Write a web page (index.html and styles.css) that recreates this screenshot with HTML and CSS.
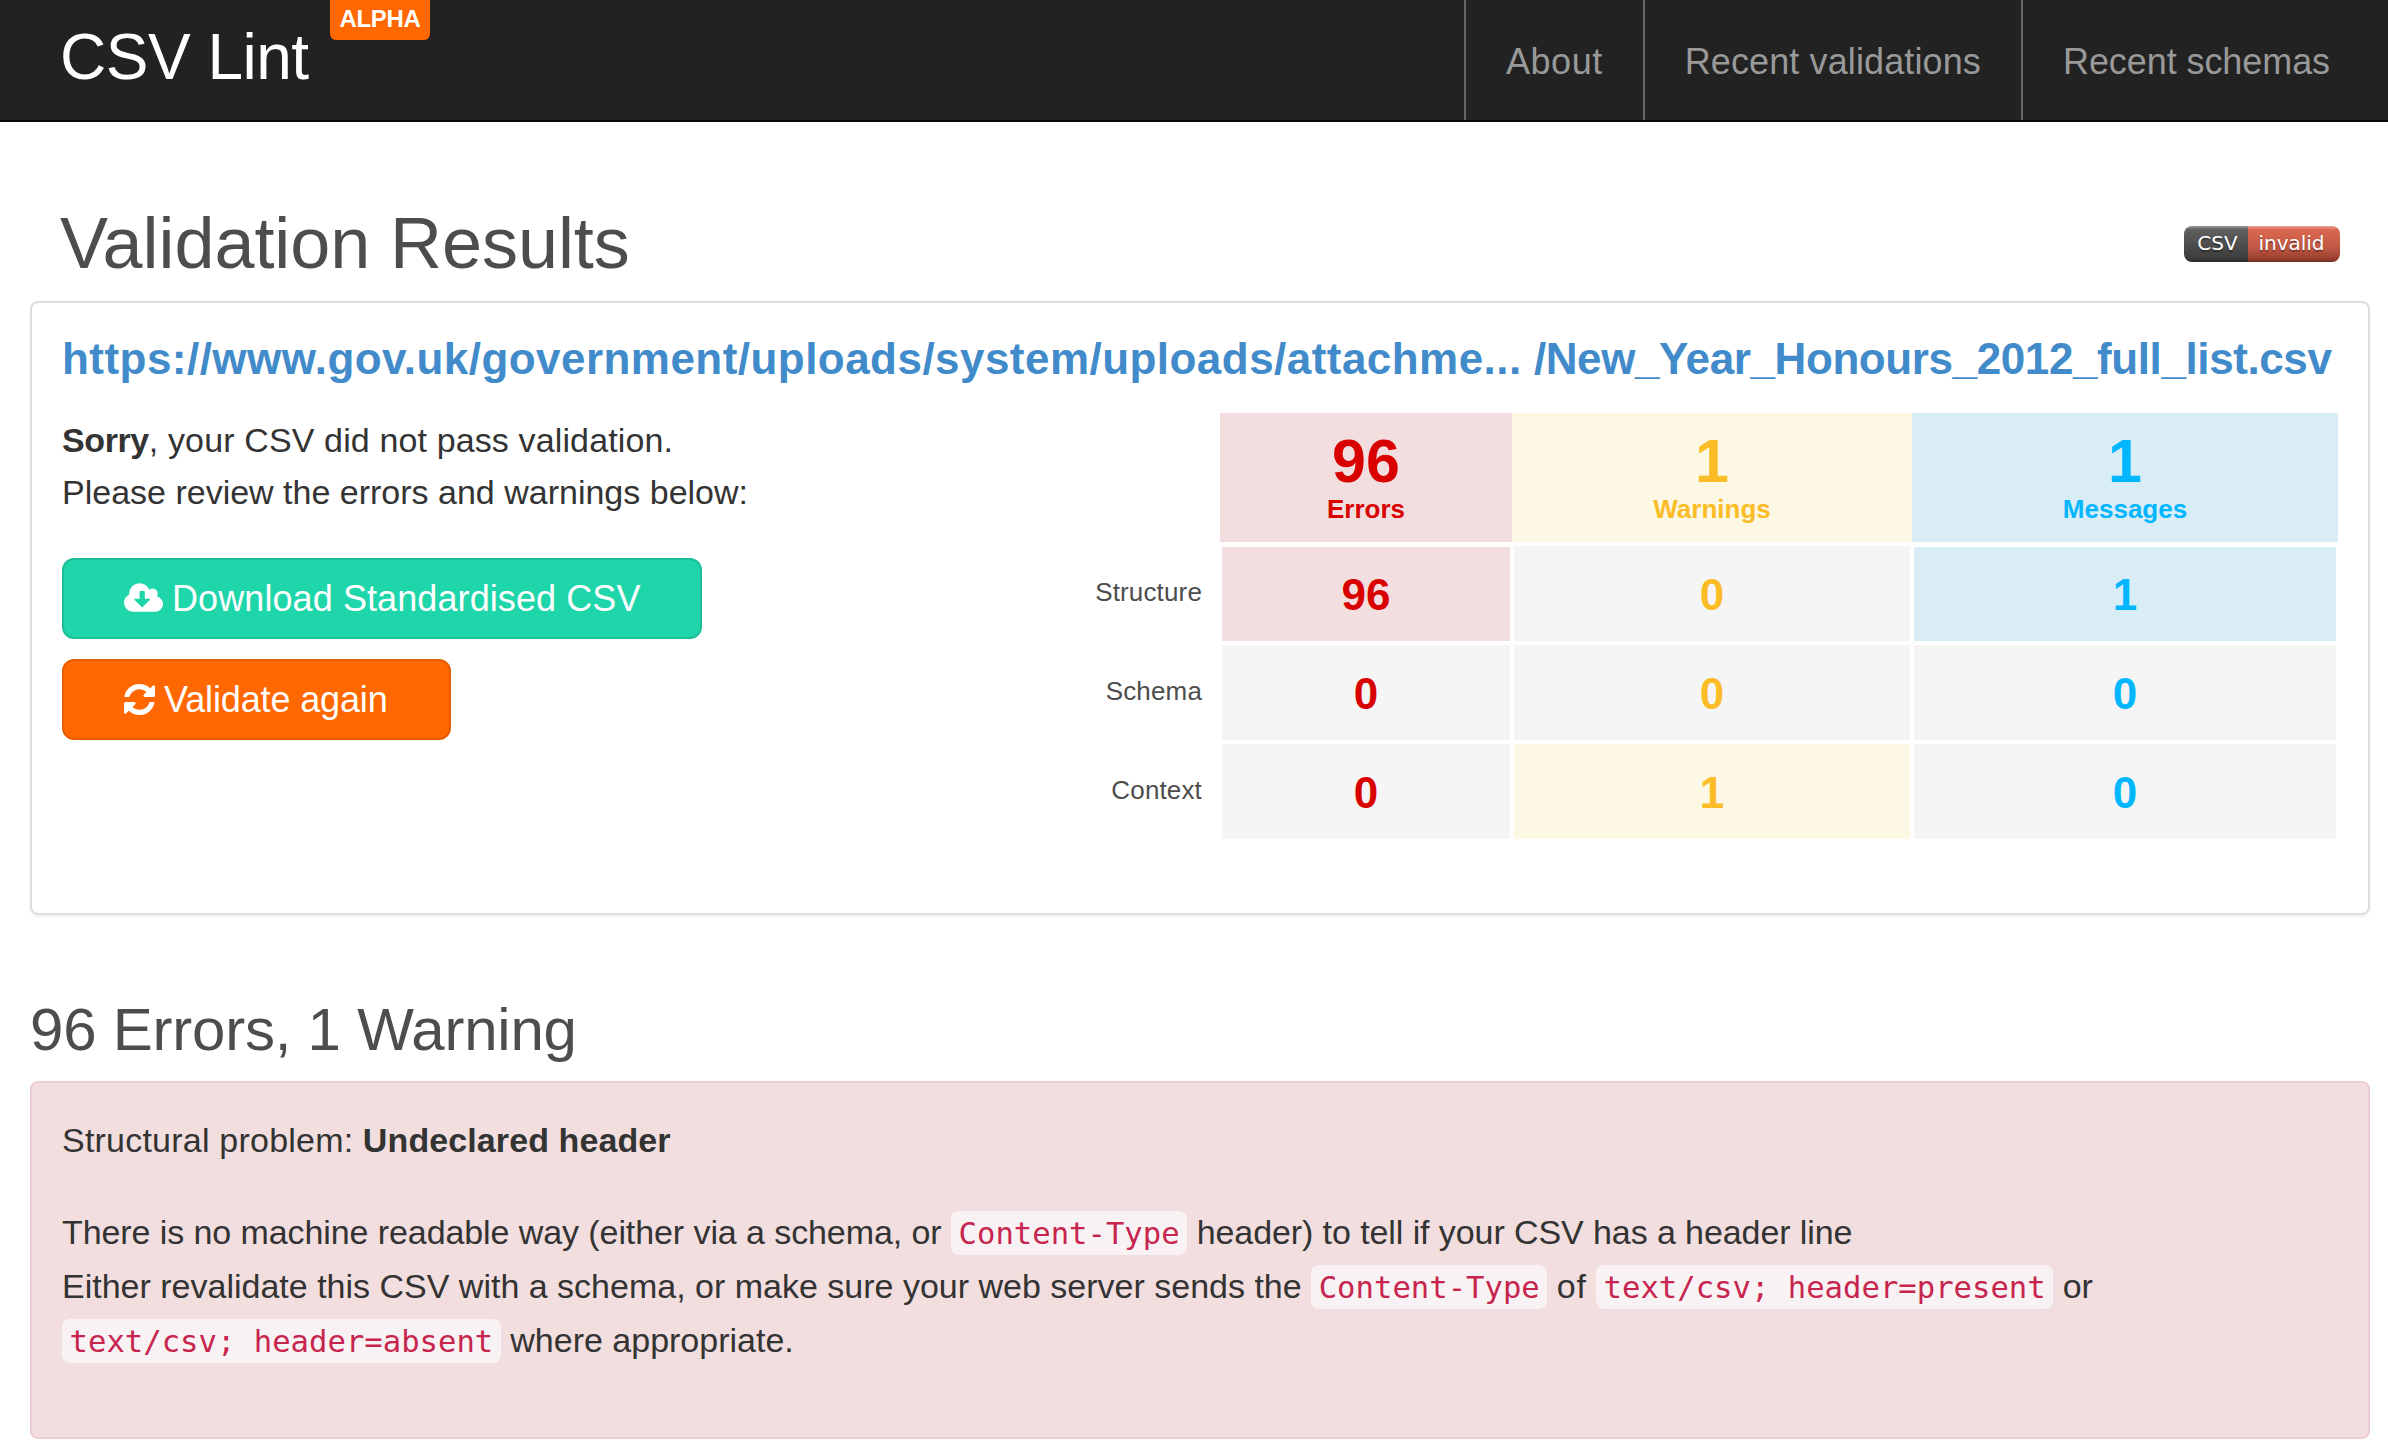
FILE: index.html
```html
<!DOCTYPE html>
<html lang="en">
<head>
<meta charset="utf-8">
<title>CSV Lint</title>
<link rel="stylesheet" href="styles.css">
</head>
<body>
<header class="navbar">
  <a class="brand"><span class="brand-name">CSV Lint</span><span class="alpha">ALPHA</span></a>
  <nav class="nav">
    <a class="nav-link nav-about">About</a>
    <a class="nav-link nav-validations">Recent validations</a>
    <a class="nav-link nav-schemas">Recent schemas</a>
  </nav>
</header>
<main class="page">
  <div class="title-row">
    <h1 class="title">Validation Results</h1>
    <div class="badge"><span class="badge-key">CSV</span><span class="badge-value">invalid</span></div>
  </div>
  <section class="panel">
    <h3 class="source"><a><span class="source-path">https://www.gov.uk/government/uploads/system/uploads/attachme...</span> <span class="source-file">/New_Year_Honours_2012_full_list.csv</span></a></h3>
    <div class="summary">
      <div class="intro">
        <p class="lead"><strong>Sorry</strong><span class="lead-rest">, your CSV did not pass validation.</span><br>Please review the errors and warnings below:</p>
        <a class="btn btn-download">
          <svg class="icon-cloud" viewBox="0 0 1920 1408"><path d="M1280 800q0-14-9-23t-23-9h-224V416q0-13-9.500-22.500T992 384H800q-13 0-22.500 9.500T768 416v352H544q-13 0-22.500 9.500T512 800q0 14 9 23l352 352q9 9 23 9t23-9l351-351q10-12 10-24zm640 224q0 159-112.500 271.500T1536 1408H448q-185 0-316.500-131.500T0 960q0-130 70-240t188-165q-2-30-2-43 0-212 150-362T768 0q156 0 285.500 87T1242 318q71-62 166-62 106 0 181 75t75 181q0 76-41 138 130 31 213.500 135.500T1920 1024z"/></svg>
          <span>Download Standardised CSV</span>
        </a>
        <a class="btn btn-again">
          <svg class="icon-refresh" viewBox="0 0 1536 1536"><path d="M1511 928q0 5-1 7-64 268-268 434.500T764 1536q-146 0-282.500-55T238 1324l-129 129q-19 19-45 19t-45-19-19-45V960q0-26 19-45t45-19h448q26 0 45 19t19 45-19 45l-137 137q71 66 161 102t187 36q134 0 250-65t186-179q11-17 53-117 8-23 30-23h192q13 0 22.500 9.500t9.500 22.500zm25-800v448q0 26-19 45t-45 19h-448q-26 0-45-19t-19-45 19-45l138-138Q969 256 768 256q-134 0-250 65T332 500q-11 17-53 117-8 23-30 23H50q-13 0-22.500-9.500T18 608v-7q65-268 270-434.500T768 0q146 0 284 55.500T1297 212l130-129q19-19 45-19t45 19 19 45z"/></svg>
          <span>Validate again</span>
        </a>
      </div>
      <div class="results">
        <div></div>
        <div class="total danger errors"><b>96</b><span>Errors</span></div>
        <div class="total warning warnings"><b>1</b><span>Warnings</span></div>
        <div class="total info messages"><b>1</b><span>Messages</span></div>
        <div class="label">Structure</div>
        <div class="cell danger errors">96</div>
        <div class="cell warnings">0</div>
        <div class="cell info messages">1</div>
        <div class="label">Schema</div>
        <div class="cell errors">0</div>
        <div class="cell warnings">0</div>
        <div class="cell messages">0</div>
        <div class="label">Context</div>
        <div class="cell errors">0</div>
        <div class="cell warning warnings">1</div>
        <div class="cell messages">0</div>
      </div>
    </div>
  </section>
  <h2 class="count">96 Errors, 1 Warning</h2>
  <section class="problem">
    <p><span class="kind">Structural problem:</span> <strong class="kind-name">Undeclared header</strong></p>
    <p><span class="tight">There is no machine readable way (either via a schema, or</span> <code>Content-Type</code> <span class="tight">header) to tell if your CSV has a header line</span><br>Either revalidate this CSV with a schema, or make sure your web server sends the <code>Content-Type</code> <span class="wide">of</span> <code>text/csv; header=present</code> or<br><code>text/csv; header=absent</code> where appropriate.</p>
  </section>
</main>
</body>
</html>
```
FILE: styles.css
```css
* { box-sizing: border-box; }
body {
  margin: 0;
  background: #fff;
  color: #333;
  font-family: "Liberation Sans", Arial, sans-serif;
  font-size: 34px;
}
h1, h2, h3, p { margin: 0; font-weight: 400; }

.navbar {
  display: flex;
  justify-content: space-between;
  height: 122px;
  padding: 0 18px 0 60px;
  background: #222;
  border-bottom: 2px solid #080808;
}
.brand { display: flex; gap: 21px; color: #fff; }
.brand-name { padding-top: 21px; font-size: 64px; line-height: 72px; letter-spacing: -.5px; }
.alpha {
  height: 40px;
  padding: 0 10px;
  border-radius: 0 0 6px 6px;
  background: #ff6700;
  font-size: 24px;
  font-weight: 700;
  line-height: 38px;
  letter-spacing: -.35px;
}
.nav { display: flex; }
.nav-link {
  height: 120px;
  padding: 0 40px;
  border-left: 2px solid #666;
  color: #999;
  font-size: 36px;
  line-height: 123px;
}
.nav-about { letter-spacing: .5px; }
.nav-validations { letter-spacing: .12px; }
.nav-schemas { letter-spacing: -.08px; }

.page { padding: 81px 18px 0 30px; }
.title-row {
  display: flex;
  justify-content: space-between;
  height: 98px;
  padding: 0 30px;
}
.title { color: #4d4d4d; font-size: 72px; line-height: 80px; letter-spacing: -.07px; }
.badge {
  display: flex;
  height: 36px;
  margin-top: 23px;
  border-radius: 8px;
  overflow: hidden;
  color: #fff;
  font-family: "DejaVu Sans", Verdana, sans-serif;
  font-size: 20px;
  line-height: 34px;
  text-align: center;
  text-shadow: 0 2px 1px rgba(1, 1, 1, .35);
}
.badge-key { width: 64px; padding-left: 3px; background: linear-gradient(#999 0, #606060 10%, #4a4a4a 60%, #3c3c3c 90%, #2a2a2a); }
.badge-value { width: 92px; padding-right: 5px; background: linear-gradient(#e8a090 0, #db6850 10%, #c05844 60%, #9c4030 90%, #702c20); }

.panel {
  width: 2340px;
  height: 614px;
  padding: 31px 30px 0;
  border: 2px solid #ddd;
  border-radius: 8px;
  box-shadow: 0 2px 2px rgba(0, 0, 0, .05);
}
.source { color: #428bca; font-size: 44px; font-weight: 700; line-height: 49px; white-space: nowrap; }
.source-path { letter-spacing: .46px; }
.source-file { letter-spacing: -.4px; }
.summary { display: flex; justify-content: space-between; margin-top: 30px; }
.intro { display: flex; flex-direction: column; align-items: flex-start; padding-top: 1px; }
.lead { margin-bottom: 40px; line-height: 52px; white-space: nowrap; }
.lead strong { letter-spacing: -.4px; }
.lead-rest { letter-spacing: .13px; }
.btn {
  display: flex;
  align-items: center;
  height: 81px;
  margin-bottom: 20px;
  padding: 0 60px;
  border: 2px solid;
  border-radius: 12px;
  color: #fff;
  font-size: 36px;
  white-space: nowrap;
}
.btn svg { flex: none; fill: #fff; }
.btn-download { width: 640px; gap: 9px; background: #1fd5aa; border-color: #1cbf98; letter-spacing: .09px; }
.btn-again { width: 389px; gap: 9px; background: #ff6700; border-color: #e65d00; letter-spacing: -.14px; }
.icon-cloud { width: 39px; height: 29px; margin-top: -3px; }
.icon-refresh { width: 31px; height: 31px; }

.results {
  display: grid;
  grid-template-columns: 128px 292px 400px 426px;
  grid-template-rows: 131px 99px 99px 99px;
}
.total { display: flex; flex-direction: column; align-items: center; height: 129px; padding-top: 15px; }
.total b { font-size: 61px; line-height: 66px; }
.total span { font-size: 26px; font-weight: 700; line-height: 30px; }
.cell {
  margin: 2px;
  padding-top: 24px;
  background: #f5f5f5;
  font-size: 44px;
  font-weight: 700;
  line-height: 49px;
  text-align: center;
}
.label { padding: 33px 18px 0 0; color: #4d4d4d; font-size: 26px; line-height: 30px; letter-spacing: .15px; text-align: right; }
.danger { background: #f2dede; }
.warning { background: #fcf8e3; }
.info { background: #d9edf7; }
.errors { color: #d90000; }
.warnings { color: #fbbc26; }
.messages { color: #00b6ff; }
.cell.danger, .cell.info { margin-top: 3px; padding-top: 23px; }

.count { padding: 81px 0 18px; color: #4d4d4d; font-size: 60px; line-height: 67px; letter-spacing: -.23px; }
.problem {
  width: 2340px;
  height: 358px;
  padding: 30px;
  border: 2px solid #ebccd1;
  border-radius: 8px;
  background: #f2dede;
  line-height: 54px;
  white-space: nowrap;
}
.problem p { margin-bottom: 38px; }
.kind { letter-spacing: .22px; }
.kind-name { letter-spacing: .1px; }
.tight { letter-spacing: -.086px; }
.wide { letter-spacing: .7px; }
code {
  padding: 5px 7.600px 4px;
  border-radius: 8px;
  background: #f9f2f4;
  color: #c7254e;
  font-family: "DejaVu Sans Mono", Menlo, monospace;
  font-size: 30.600px;
  line-height: 36px;
}
```
